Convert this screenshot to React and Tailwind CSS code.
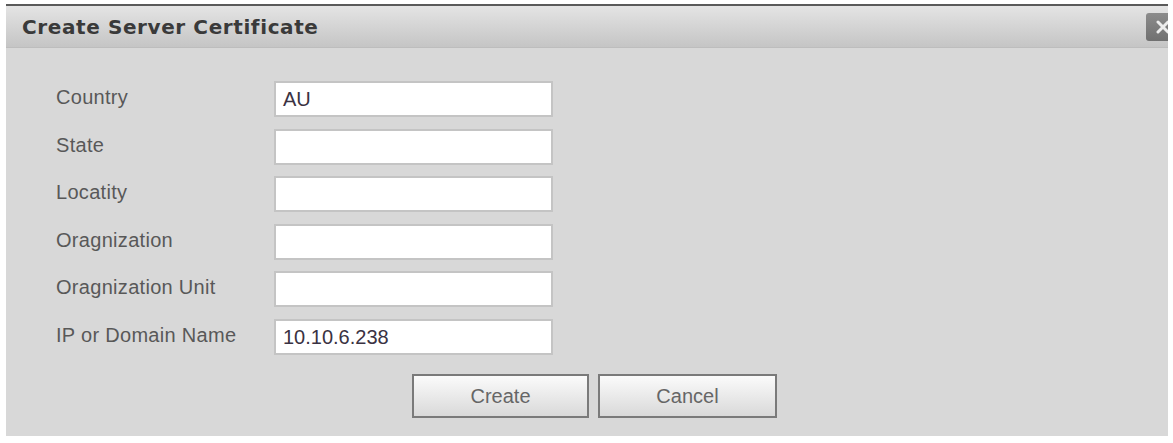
import React from 'react';

const FIELDS = [
  { label: 'Country', value: 'AU' },
  { label: 'State', value: '' },
  { label: 'Locatity', value: '' },
  { label: 'Oragnization', value: '' },
  { label: 'Oragnization Unit', value: '' },
  { label: 'IP or Domain Name', value: '10.10.6.238' },
];

export default function App() {
  return (
    <div className="w-[1173px] h-[443px] bg-white pt-[4px] pl-[6px] pr-[5px] font-['Liberation_Sans',Arial,sans-serif]">
      <div className="relative h-[432px] bg-[#d8d8d8] border-t-2 border-[#5a5a5a] overflow-hidden flex flex-col">
        {/* Header */}
        <div className="h-[42px] shrink-0 flex items-center pl-[16px] bg-gradient-to-b from-[#e4e4e4] to-[#c5c5c5] border-b border-[#bdbdbd]">
          <h1 className="text-[20px] font-bold tracking-[0.6px] text-[#3a3a3a] font-['DejaVu_Sans',Verdana,sans-serif]">
            Create Server Certificate
          </h1>
        </div>
        <button className="absolute top-[7px] right-[-7px] w-[29px] h-[28px] rounded-[3px] bg-gradient-to-b from-[#8c8c8c] to-[#707070] flex items-center justify-center pl-[4px]">
          <svg width="14" height="14" viewBox="0 0 14 14">
            <path d="M2 2 L12 12 M12 2 L2 12" stroke="#ececec" strokeWidth="3" strokeLinecap="round" />
          </svg>
        </button>

        {/* Form */}
        <div className="flex flex-col gap-[11.6px] pl-[50px] pt-[33px]">
          {FIELDS.map((f) => (
            <div key={f.label} className="flex items-center">
              <span className="w-[218px] text-[20px] tracking-[0.3px] text-[#585858] -mt-[4px]">{f.label}</span>
              <div className="w-[279px] h-[36px] bg-white border-2 border-[#c4c4c4] flex items-center pl-[7px] text-[20px] text-[#3a3242]">
                {f.value}
              </div>
            </div>
          ))}
        </div>

        {/* Buttons */}
        <div className="flex gap-[9px] pl-[406px] pt-[19px]">
          <button className="w-[177px] h-[44px] border-2 border-[#7a7a7a] bg-gradient-to-b from-[#fbfbfb] to-[#d9d9d9] text-[20px] text-[#666]">
            Create
          </button>
          <button className="w-[179px] h-[44px] border-2 border-[#7a7a7a] bg-gradient-to-b from-[#fbfbfb] to-[#d9d9d9] text-[20px] text-[#666]">
            Cancel
          </button>
        </div>
      </div>
    </div>
  );
}
